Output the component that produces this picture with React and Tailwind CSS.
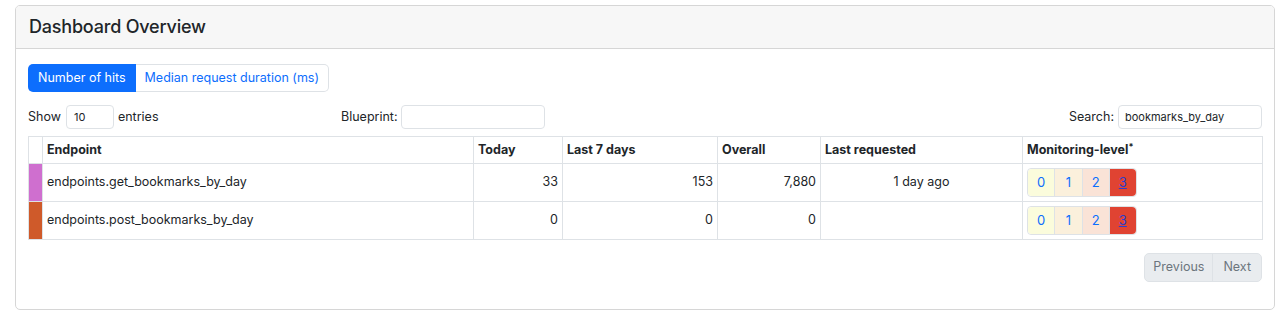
import React from 'react';

const rows = [
  { color: 'bg-[#cf6fcf]', name: 'endpoints.get_bookmarks_by_day', today: '33', week: '153', overall: '7,880', last: '1 day ago' },
  { color: 'bg-[#cf5a2a]', name: 'endpoints.post_bookmarks_by_day', today: '0', week: '0', overall: '0', last: '' },
];

const levels = [
  { n: '0', cls: 'bg-[#fbfcdc] text-[#0d6efd] rounded-l-[4px]' },
  { n: '1', cls: 'bg-[#fbf0dc] text-[#0d6efd]' },
  { n: '2', cls: 'bg-[#fae3d7] text-[#0d6efd]' },
  { n: '3', cls: 'bg-[#e04332] text-[#2b3fd0] underline rounded-r-[4px]' },
];

const MonitoringLevel = () => (
  <div className="flex h-[29px] w-[110px] rounded-[4px] border border-[#dee2e6]">
    {levels.map((l, i) => (
      <div
        key={l.n}
        className={`flex-1 flex items-center justify-center text-[13px] ${l.cls} ${i > 0 ? 'border-l border-[#dee2e6]' : ''}`}
      >
        {l.n}
      </div>
    ))}
  </div>
);

export default function App() {
  return (
    <div className="w-[1286px] h-[319px] bg-white pt-[5px] pl-[15px] text-[#212529]" style={{ fontFamily: 'Inter, "Liberation Sans", sans-serif' }}>
      <div className="w-[1260px] border border-[#d6d6d6] rounded-[5px] overflow-hidden">
        {/* Header */}
        <div className="h-[43px] bg-[#f7f7f7] border-b border-[#d6d6d6] flex items-center px-[13px]">
          <h2 className="text-[18px] font-medium leading-none tracking-[-0.2px]">Dashboard Overview</h2>
        </div>

        <div className="px-3 pt-[15px] pb-[27px]">
          {/* Tabs */}
          <div className="flex h-[28px] text-[12.5px]">
            <div className="px-[10px] flex items-center bg-[#0d6efd] text-white rounded-l-[5px]">Number of hits</div>
            <div className="px-[9px] flex items-center text-[#0d6efd] border border-l-0 border-[#dee2e6] rounded-r-[5px]">Median request duration (ms)</div>
          </div>

          {/* Controls */}
          <div className="mt-[13px] flex items-center h-[24px] text-[12.5px]">
            <div className="flex items-center w-[313px]">
              <span>Show</span>
              <div className="ml-[5px] w-[48px] h-[24px] border border-[#dee2e6] rounded-[4px] flex items-center pl-[7px] text-[11px]">10</div>
              <span className="ml-[4px]">entries</span>
            </div>
            <div className="flex items-center">
              <span>Blueprint:</span>
              <div className="ml-[3px] w-[144px] h-[24px] border border-[#dee2e6] rounded-[4px]"></div>
            </div>
            <div className="flex items-center ml-auto">
              <span>Search:</span>
              <div className="ml-[4px] w-[144px] h-[24px] border border-[#dee2e6] rounded-[4px] flex items-center pl-[6px] text-[11px]">bookmarks_by_day</div>
            </div>
          </div>

          {/* Table */}
          <table className="mt-[7px] w-[1234px] table-fixed border-collapse text-[12.5px]">
            <colgroup>
              <col className="w-[14px]" />
              <col className="w-[431px]" />
              <col className="w-[89px]" />
              <col className="w-[155px]" />
              <col className="w-[103px]" />
              <col className="w-[202px]" />
              <col className="w-[240px]" />
            </colgroup>
            <thead>
              <tr className="h-[27px] font-semibold">
                <th className="border border-[#dee2e6]"></th>
                <th className="border border-[#dee2e6] text-left px-[4px]">Endpoint</th>
                <th className="border border-[#dee2e6] text-left px-[4px]">Today</th>
                <th className="border border-[#dee2e6] text-left px-[4px]">Last 7 days</th>
                <th className="border border-[#dee2e6] text-left px-[4px]">Overall</th>
                <th className="border border-[#dee2e6] text-left px-[4px]">Last requested</th>
                <th className="border border-[#dee2e6] text-left px-[4px]">
                  Monitoring-level<sup className="text-[9px] relative -top-[4px]">*</sup>
                </th>
              </tr>
            </thead>
            <tbody>
              {rows.map((r) => (
                <tr key={r.name} className="h-[38px]">
                  <td className={`border border-[#dee2e6] ${r.color}`}></td>
                  <td className="border border-[#dee2e6] px-[4px]">{r.name}</td>
                  <td className="border border-[#dee2e6] px-[4px] text-right">{r.today}</td>
                  <td className="border border-[#dee2e6] px-[4px] text-right">{r.week}</td>
                  <td className="border border-[#dee2e6] px-[4px] text-right">{r.overall}</td>
                  <td className="border border-[#dee2e6] px-[4px] text-center">{r.last}</td>
                  <td className="border border-[#dee2e6] px-[4px]">
                    <MonitoringLevel />
                  </td>
                </tr>
              ))}
            </tbody>
          </table>

          {/* Pagination */}
          <div className="mt-[13px] flex justify-end">
            <div className="flex h-[29px] text-[12.5px] text-[#6c757d] bg-[#e9ecef] border border-[#dee2e6] rounded-[5px]">
              <div className="px-[8px] flex items-center border-r border-[#dee2e6]">Previous</div>
              <div className="px-[10px] flex items-center">Next</div>
            </div>
          </div>
        </div>
      </div>
    </div>
  );
}
